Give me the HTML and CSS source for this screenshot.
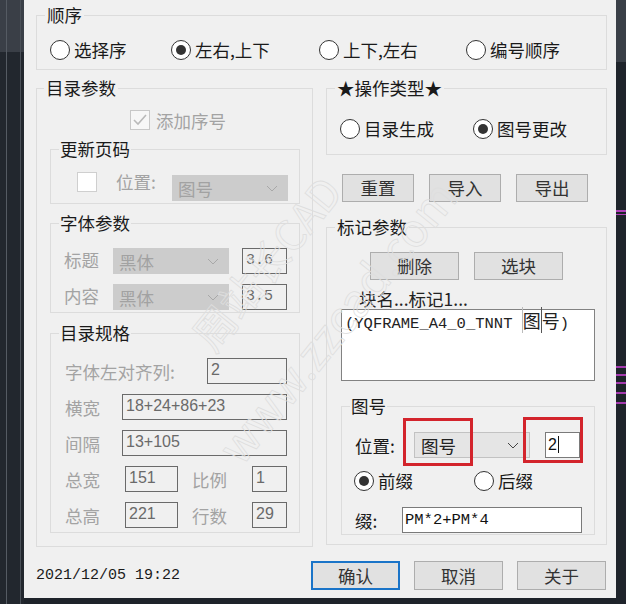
FILE: index.html
```html
<!DOCTYPE html>
<html>
<head>
  <meta charset="utf-8">
  <title>目录生成</title>
  <link rel="stylesheet" href="styles.css">
</head>
<body>
  <div class="screen">
    <div class="side-left"></div>

    <div class="dialog">
      <fieldset class="group order">
        <legend>顺序</legend>
        <div class="order-row">
          <label class="opt"><span class="radio"></span>选择序</label>
          <label class="opt"><span class="radio checked"></span>左右,上下</label>
          <label class="opt"><span class="radio"></span>上下,左右</label>
          <label class="opt"><span class="radio"></span>编号顺序</label>
        </div>
      </fieldset>

      <div class="columns">
        <!-- left: catalog parameters -->
        <fieldset class="group catalog">
          <legend>目录参数</legend>
          <div class="check-row">
            <span class="checkbox disabled">
              <svg width="18" height="18" viewBox="0 0 18 18"><polyline points="3,9 7,13 15,4" fill="none" stroke="#b9b9b9" stroke-width="1.6"/></svg>
            </span>
            <span class="muted">添加序号</span>
          </div>

          <fieldset class="group sub page">
            <legend>更新页码</legend>
            <div class="page-row">
              <span class="checkbox"></span>
              <span class="muted page-lbl">位置:</span>
              <div class="combo disabled">
                <span>图号</span>
                <svg width="12" height="7" viewBox="0 0 12 7"><polyline points="1,1 6,6 11,1" fill="none" stroke="#a8a8a8" stroke-width="1"/></svg>
              </div>
            </div>
          </fieldset>

          <fieldset class="group sub font">
            <legend>字体参数</legend>
            <div class="row">
              <span class="muted lbl-font">标题</span>
              <div class="combo disabled">
                <span>黑体</span>
                <svg width="12" height="7" viewBox="0 0 12 7"><polyline points="1,1 6,6 11,1" fill="none" stroke="#a8a8a8" stroke-width="1"/></svg>
              </div>
              <div class="edit ro mono size">3.6</div>
            </div>
            <div class="row gap">
              <span class="muted lbl-font">内容</span>
              <div class="combo disabled">
                <span>黑体</span>
                <svg width="12" height="7" viewBox="0 0 12 7"><polyline points="1,1 6,6 11,1" fill="none" stroke="#a8a8a8" stroke-width="1"/></svg>
              </div>
              <div class="edit ro mono size">3.5</div>
            </div>
          </fieldset>

          <fieldset class="group sub spec">
            <legend>目录规格</legend>
            <div class="row">
              <span class="muted lbl-align">字体左对齐列:</span>
              <div class="edit ro w80">2</div>
            </div>
            <div class="row gap">
              <span class="muted lbl-wide">横宽</span>
              <div class="edit ro w165">18+24+86+23</div>
            </div>
            <div class="row gap">
              <span class="muted lbl-wide">间隔</span>
              <div class="edit ro w165">13+105</div>
            </div>
            <div class="row gap">
              <span class="muted lbl-total">总宽</span>
              <div class="edit ro w53">151</div>
              <span class="muted lbl-ratio">比例</span>
              <div class="edit ro w35">1</div>
            </div>
            <div class="row gap">
              <span class="muted lbl-total">总高</span>
              <div class="edit ro w53">221</div>
              <span class="muted lbl-ratio">行数</span>
              <div class="edit ro w35">29</div>
            </div>
          </fieldset>
        </fieldset>

        <!-- right: operation + mark parameters -->
        <div class="right-col">
          <fieldset class="group optype">
            <legend>★操作类型★</legend>
            <div class="optype-row">
              <label class="opt"><span class="radio"></span>目录生成</label>
              <label class="opt"><span class="radio checked"></span>图号更改</label>
            </div>
          </fieldset>

          <div class="tool-row">
            <button class="btn small">重置</button>
            <button class="btn small">导入</button>
            <button class="btn small">导出</button>
          </div>

          <fieldset class="group mark">
            <legend>标记参数</legend>
            <div class="mark-btns">
              <button class="btn mid">删除</button>
              <button class="btn mid">选块</button>
            </div>
            <div class="list-lbl">块名...标记1...</div>
            <div class="listbox"><span class="mono-l">(YQFRAME_A4_0_TNNT </span><span class="caret">图</span>号<span class="mono-l">)</span></div>

            <fieldset class="group sub tuhao">
              <legend>图号</legend>
              <div class="row">
                <span class="lbl-pos">位置:</span>
                <div class="combo active">
                  <span>图号</span>
                  <svg width="12" height="7" viewBox="0 0 12 7"><polyline points="1,1 6,6 11,1" fill="none" stroke="#444" stroke-width="1"/></svg>
                </div>
                <div class="edit white num"><span class="caret-after">2</span></div>
              </div>
              <div class="radio-row">
                <label class="opt fix"><span class="radio checked"></span>前缀</label>
                <label class="opt"><span class="radio"></span>后缀</label>
              </div>
              <div class="row affix">
                <span class="lbl-affix">缀:</span>
                <div class="edit white mono w180">PM*2+PM*4</div>
              </div>
            </fieldset>
          </fieldset>
        </div>
      </div>

      <div class="footer">
        <span class="stamp">2021/12/05 19:22</span>
        <div class="footer-btns">
          <button class="btn big default">确认</button>
          <button class="btn big">取消</button>
          <button class="btn big">关于</button>
        </div>
      </div>
    </div>

    <div class="side-right"></div>

    <!-- annotation boxes -->
    <div class="mark-box box-combo"></div>
    <div class="mark-box box-edit"></div>

    <!-- watermark -->
    <div class="wm wm-name">周站长CAD</div>
    <div class="wm wm-site">www.zzcad.com</div>
  </div>
</body>
</html>
```

FILE: styles.css
```css
body {
  margin: 0;
  background-color: #1e232a;
  font-family: "Noto Sans CJK SC", sans-serif;
  font-size: 17.5px;
  color: #1a1a1a;
}

.screen {
  position: relative;
  width: 626px;
  height: 604px;
  display: flex;
  overflow: hidden;
  background-color: #1e232a;
}

.side-left {
  width: 24px;
  height: 100%;
  background: linear-gradient(90deg, transparent 6px, #555b63 6px, #555b63 7px, transparent 7px, transparent 20px, #4a5058 20px, #4a5058 21px, transparent 21px),
              linear-gradient(#3a3f47 0, #3a3f47 52px, #22272e 52px);
}

.side-right {
  flex: 1;
  height: 100%;
  background: linear-gradient(#3a3f47 0, #3a3f47 62px, #1f242b 62px, #1f242b 210px, #b03fb8 210px, #b03fb8 212px, #1f242b 212px, #1f242b 214px, #b03fb8 214px, #b03fb8 215px, #1f242b 215px, #1f242b 366px, #a43aae 366px, #a43aae 368px, #1f242b 368px, #1f242b 374px, #a43aae 374px, #a43aae 376px, #1f242b 376px, #1f242b 382px, #a43aae 382px, #a43aae 384px, #1f242b 384px, #1f242b 392px, #a43aae 392px, #a43aae 394px, #1f242b 394px, #1f242b 402px, #a43aae 402px, #a43aae 404px, #1f242b 404px);
}

.dialog {
  width: 592px;
  height: 598px;
  box-sizing: border-box;
  padding: 5px 9px 0 12px;
  background-color: #f0f0f0;
}

/* group boxes */
.group {
  margin: 0;
  padding: 0 8px;
  border: 1px solid #dcdcdc;
  min-width: 0;
}

.group legend {
  padding: 0 2px;
  line-height: 20px;
}

.sub legend {
  padding: 0 1px;
}

.catalog > legend {
  margin-left: -6px;
}

.muted {
  color: #a3a3a3;
}

/* radio and checkbox */
.opt {
  display: flex;
  align-items: center;
  height: 20px;
  line-height: 20px;
  white-space: nowrap;
}

.radio {
  width: 20px;
  height: 20px;
  box-sizing: border-box;
  border: 1px solid #333;
  border-radius: 50%;
  background-color: #fff;
  margin-right: 4px;
  display: flex;
  align-items: center;
  justify-content: center;
  flex-shrink: 0;
}

.radio.checked::after {
  content: "";
  width: 10px;
  height: 10px;
  border-radius: 50%;
  background-color: #333;
}

.checkbox {
  width: 20px;
  height: 20px;
  box-sizing: border-box;
  border: 1px solid #cfcfcf;
  background-color: #fff;
  display: flex;
  align-items: center;
  justify-content: center;
  flex-shrink: 0;
}

.checkbox.disabled {
  border-color: #c8c8c8;
  background-color: #f7f7f7;
}

/* order */
.order-row {
  display: grid;
  grid-template-columns: 121px 148px 147px auto;
  margin: 14px 0 8px 5px;
  height: 22px;
  align-items: center;
}

/* columns */
.columns {
  display: flex;
  gap: 13px;
  margin-top: 8px;
}

.catalog {
  width: 277px;
  box-sizing: border-box;
  padding: 0 12px 13px 13px;
}

.check-row {
  display: flex;
  align-items: center;
  gap: 6px;
  height: 20px;
  margin: 12px 0 0 80px;
}

.sub {
  margin-top: 9px;
}

.spec {
  margin-top: 10px;
  padding-bottom: 4px;
}

.page {
  padding-bottom: 2px;
}

.page-row {
  display: flex;
  align-items: flex-start;
  height: 29px;
  margin-top: 13px;
}

.page-row .checkbox {
  margin-left: 18px;
}

.page-lbl {
  line-height: 20px;
  margin-left: 19px;
  width: 56px;
}

.page-row .combo {
  margin-top: 3px;
}

.font {
  padding-bottom: 2px;
}

.row {
  display: flex;
  align-items: center;
  height: 26px;
  margin-top: 15px;
}

.row.gap {
  margin-top: 10px;
}

.lbl-font {
  width: 49px;
  margin-left: 5px;
  margin-top: -4px;
}

.lbl-align {
  width: 142px;
  margin-left: 6px;
}

.lbl-wide {
  width: 57px;
  margin-left: 6px;
}

.lbl-total {
  width: 60px;
  margin-left: 6px;
}

.lbl-ratio {
  width: 60px;
  margin-left: 14px;
}

/* combo boxes */
.combo {
  width: 116px;
  height: 26px;
  box-sizing: border-box;
  display: flex;
  align-items: center;
  justify-content: space-between;
  padding: 0 10px 0 6px;
  flex-shrink: 0;
}

.combo.disabled {
  background-color: #cccccc;
  color: #a2a2a2;
}

.combo.active {
  background-color: #e5e5e5;
  border: 1px solid #c2c2c2;
  color: #222;
}

.font .combo {
  margin-right: 13px;
}

/* edit boxes */
.edit {
  height: 26px;
  box-sizing: border-box;
  border: 1px solid #6a6a6a;
  padding: 0 3px;
  line-height: 22px;
  font-family: "Liberation Sans", sans-serif;
  font-size: 16px;
  flex-shrink: 0;
  white-space: nowrap;
}

.edit.ro {
  background-color: #f0f0f0;
  color: #6a6a6a;
}

.edit.white {
  background-color: #fff;
  color: #111;
  border-color: #7a7a7a;
}

.mono {
  font-family: "Liberation Mono", monospace;
}

.edit.size {
  width: 45px;
  font-size: 15px;
  line-height: 24px;
}

.w80 { width: 80px; }
.w165 { width: 165px; }
.w53 { width: 53px; }
.w35 { width: 35px; }
.w180 { width: 180px; }

.edit.w180 {
  font-size: 15.5px;
  line-height: 24px;
  padding-left: 2px;
}

/* right column */
.right-col {
  width: 281px;
}

.optype-row {
  display: grid;
  grid-template-columns: 133px auto;
  margin: 21px 0 15px 5px;
  height: 20px;
}

.tool-row {
  display: flex;
  gap: 15px;
  margin-top: 19px;
  padding-left: 16px;
}

.btn {
  height: 28px;
  box-sizing: border-box;
  border: 1px solid #adadad;
  background-color: #e1e1e1;
  color: #333;
  font-family: "Noto Sans CJK SC", sans-serif;
  font-size: 17.5px;
  line-height: 24px;
  padding: 0;
  cursor: pointer;
}

.btn.small { width: 72px; }
.btn.mid { width: 89px; }
.btn.big { width: 89px; height: 29px; }

.btn.default {
  border: 2px solid #1a74c8;
}

.mark {
  margin-top: 15px;
  padding-bottom: 9px;
}

.mark-btns {
  display: flex;
  gap: 15px;
  margin: 15px 0 0 35px;
}

.list-lbl {
  margin: 9px 0 0 24px;
  line-height: 20px;
  color: #222;
}

.listbox {
  width: 254px;
  height: 72px;
  box-sizing: border-box;
  margin-left: 6px;
  border: 1px solid #828282;
  background-color: #fff;
  padding: 0 3px;
  line-height: 20px;
  font-size: 18px;
  color: #222;
  white-space: nowrap;
}

.mono-l {
  font-family: "Liberation Mono", monospace;
  font-size: 15.5px;
}

.caret {
  border-left: 1px solid #bbb;
  border-right: 1px solid #555;
}

.tuhao {
  width: 254px;
  box-sizing: border-box;
  margin: 15px 0 0 6px;
  padding-bottom: 1px;
}

.tuhao .row {
  margin-top: 16px;
}

.lbl-pos {
  width: 59px;
  margin-left: 5px;
}

.edit.num {
  width: 35px;
  margin-left: 15px;
  font-family: "Liberation Sans", sans-serif;
  font-size: 16px;
  line-height: 24px;
  padding-left: 2px;
}

.caret-after {
  border-right: 1px solid #111;
  padding-right: 1px;
}

.radio-row {
  display: grid;
  grid-template-columns: 120px auto;
  margin: 13px 0 0 4px;
  height: 20px;
}

.tuhao .row.affix {
  margin-top: 16px;
}

.lbl-affix {
  width: 47px;
  margin-left: 5px;
}

/* footer */
.footer {
  display: flex;
  align-items: center;
  justify-content: space-between;
  margin-top: 14px;
  height: 29px;
}

.stamp {
  font-family: "Liberation Mono", monospace;
  font-size: 15px;
  color: #1a1a1a;
}

.footer-btns {
  display: flex;
  gap: 14px;
  margin-right: 1px;
}

/* red annotation boxes */
.mark-box {
  position: absolute;
  border: 3px solid #d3242c;
  box-sizing: border-box;
}

.box-combo {
  left: 403px;
  top: 418px;
  width: 70px;
  height: 48px;
}

.box-edit {
  left: 523px;
  top: 417px;
  width: 60px;
  height: 46px;
}

/* watermark */
.wm {
  position: absolute;
  font-family: "Noto Sans CJK SC", sans-serif;
  color: transparent;
  -webkit-text-stroke: 0.8px #dedede;
  transform-origin: 0 50%;
  transform: rotate(-51deg);
  white-space: nowrap;
  pointer-events: none;
}

.wm-name {
  left: 200px;
  top: 322px;
  font-size: 42px;
  line-height: 42px;
}

.wm-site {
  left: 226px;
  top: 432px;
  font-size: 46px;
  line-height: 46px;
}
```
